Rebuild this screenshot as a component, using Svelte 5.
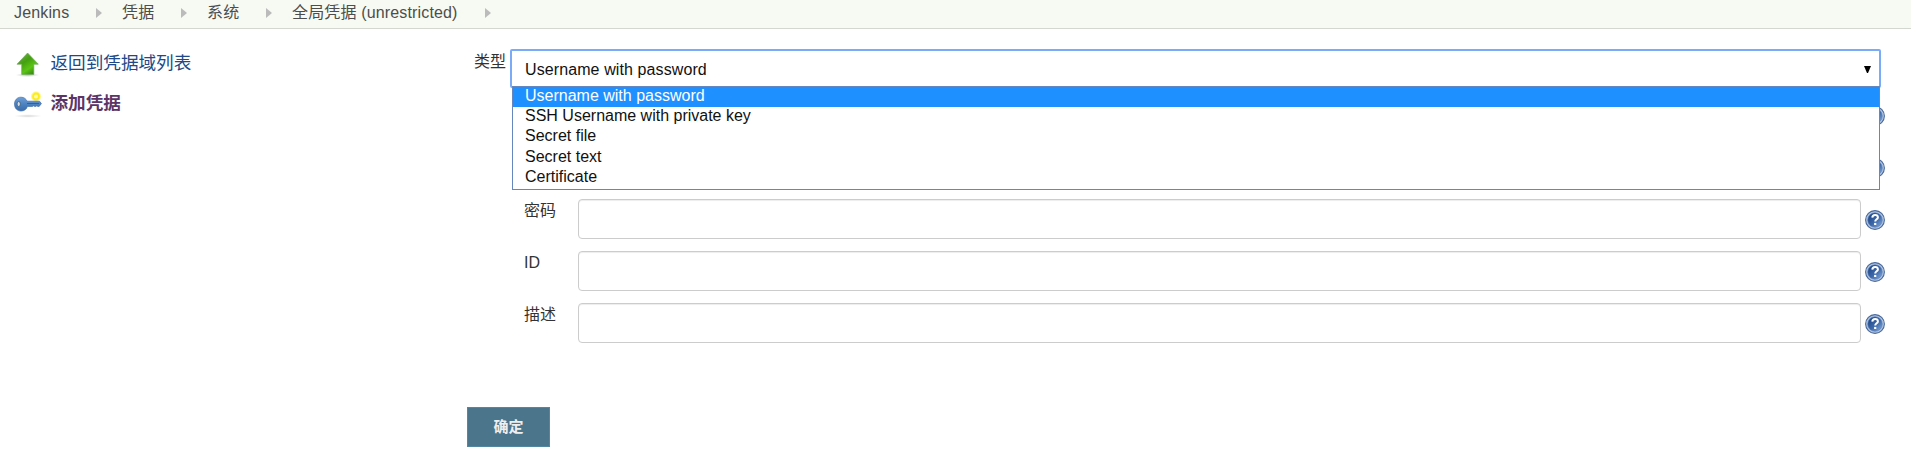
<script>
  const crumbs = ['Jenkins', '凭据', '系统', '全局凭据 (unrestricted)'];
  const options = [
    'Username with password',
    'SSH Username with private key',
    'Secret file',
    'Secret text',
    'Certificate'
  ];
  const fields = ['', '', '密码', 'ID', '描述'];
</script>

<header class="crumbs">
  {#each crumbs as crumb}
    <span class="crumb">{crumb}</span>
    <svg class="sep" width="6" height="10" viewBox="0 0 6 10"><path d="M0 0L6 5L0 10Z" fill="#bbb" /></svg>
  {/each}
</header>

<div class="page">
  <nav class="side">
    <a class="task" href="#back">
      <svg width="28" height="28" viewBox="0 0 28 28">
        <defs>
          <linearGradient id="green" x1="0" y1="0" x2="0.7" y2="1">
            <stop offset="0" stop-color="#7eb458" />
            <stop offset="0.45" stop-color="#43a010" />
            <stop offset="0.75" stop-color="#5cc415" />
            <stop offset="1" stop-color="#388b13" />
          </linearGradient>
          <radialGradient id="shade">
            <stop offset="0" stop-color="#777" stop-opacity="0.5" />
            <stop offset="1" stop-color="#999" stop-opacity="0" />
          </radialGradient>
        </defs>
        <ellipse cx="13.5" cy="25" rx="12" ry="2" fill="url(#shade)" />
        <path d="M13.6 3L24.3 14.2H19.8V24.4H7.7V14.2H3Z" fill="url(#green)" stroke="#6fa857" stroke-width="0.7" />
      </svg>
      <span>返回到凭据域列表</span>
    </a>
    <a class="task current" href="#add">
      <svg width="28" height="28" viewBox="0 0 28 28">
        <defs>
          <linearGradient id="steel" x1="0" y1="0" x2="0" y2="1">
            <stop offset="0" stop-color="#6f9fd5" />
            <stop offset="0.5" stop-color="#4d83c2" />
            <stop offset="1" stop-color="#3b6ca8" />
          </linearGradient>
          <radialGradient id="pale">
            <stop offset="0" stop-color="#999" stop-opacity="0.4" />
            <stop offset="1" stop-color="#aaa" stop-opacity="0" />
          </radialGradient>
        </defs>
        <ellipse cx="14" cy="26" rx="14" ry="1.8" fill="url(#pale)" />
        <circle cx="22" cy="6.4" r="4.9" fill="#fff35a" opacity="0.75" />
        <circle cx="22" cy="6.4" r="2.9" fill="#fff9ae" stroke="#fbec20" stroke-width="1.8" />
        <path
          d="M7 7.2C10.2 7.2 12.2 9 13 11.2H25.5L27.4 13.6L25.2 16.4H23.8L22.8 15.8L21.8 16.4H20.6L19.6 15.8L18.5 16.4H13.4C12.6 19.2 10.4 21 7 21C3 21 0.5 18 0.5 14.1C0.5 10.2 3 7.2 7 7.2Z"
          fill="url(#steel)" stroke="#416fa9" stroke-width="0.7" />
        <path d="M13 13.5H25" stroke="#31609b" stroke-width="1" />
        <ellipse cx="4.7" cy="14" rx="1.7" ry="2.5" fill="#d7dde2" stroke="#416584" stroke-width="0.9" />
      </svg>
      <span>添加凭据</span>
    </a>
  </nav>

  <main class="form">
    <div class="kind">
      <label class="kind-label" for="kind">类型</label>
      <div class="select" id="kind" role="combobox" aria-expanded="true" aria-controls="kinds" tabindex="0">
        <span>Username with password</span>
        <svg width="7" height="7" viewBox="0 0 7 7"><path d="M0 0H7L4 7H3Z" fill="#000" /></svg>
        <ul class="popup" id="kinds">
          {#each options as option, i}
            <li class:active={i === 0}>{option}</li>
          {/each}
        </ul>
      </div>
    </div>

    <div class="fields">
      {#each fields as field, i}
        <div class="field">
          <label for={`field-${i}`}>{field}</label>
          <input id={`field-${i}`} type="text" />
          <svg class="help" width="20" height="20" viewBox="0 0 20 20">
            <defs>
              <linearGradient id={`disc-${i}`} x1="0" y1="0" x2="1" y2="1">
                <stop offset="0.1" stop-color="#1f4584" />
                <stop offset="0.55" stop-color="#3c68aa" />
                <stop offset="1" stop-color="#8cb1df" />
              </linearGradient>
            </defs>
            <circle cx="10" cy="10" r="9.4" fill="#b3c7e3" stroke="#49699b" stroke-width="1.1" />
            <circle cx="10" cy="10" r="7.3" fill={`url(#disc-${i})`} stroke="#5d80b4" stroke-width="0.6" />
            <path d="M7.3 7.6C7.4 5.8 8.5 5 10.1 5C11.8 5 12.9 6 12.9 7.4C12.9 9.3 10.2 9.4 10.2 11.6" fill="none" stroke="#fff" stroke-width="2" />
            <rect x="9.1" y="12.9" width="2.2" height="2.1" fill="#fff" />
          </svg>
        </div>
      {/each}
    </div>

    <button class="submit" type="button">确定</button>
  </main>
</div>

<style>
  :global(body) {
    margin: 0;
    background: #fff;
    overflow: hidden;
  }
  :global(#app) {
    font-family: 'Liberation Sans', 'Noto Sans CJK SC', sans-serif;
    font-size: 16px;
    color: #333;
  }
  .crumbs {
    box-sizing: border-box;
    height: 29px;
    padding: 0 0 3px 14px;
    display: flex;
    align-items: center;
    background: #f6faf2;
    border-bottom: 1px solid #d3d7cf;
    color: #4d4d4d;
    line-height: 24px;
    letter-spacing: 0.15px;
    white-space: nowrap;
  }
  .sep {
    margin: 0 19.7px 0 27px;
  }
  .page {
    display: grid;
    grid-template-columns: 467px 1fr;
  }
  .side {
    padding: 21px 0 0 14px;
  }
  .task {
    display: flex;
    align-items: center;
    gap: 8.5px;
    height: 28px;
    margin-bottom: 12px;
    color: #204a87;
    font-size: 17.6px;
    line-height: 26px;
    text-decoration: none;
  }
  .task span {
    margin-top: -2px;
  }
  .current {
    color: #5c3566;
    font-weight: bold;
  }
  .form {
    padding: 20px 26px 0 0;
  }
  .kind {
    display: flex;
    height: 46px;
    padding-left: 7px;
  }
  .kind-label {
    width: 36px;
    padding-top: 1px;
    line-height: 24px;
  }
  .select {
    position: relative;
    box-sizing: border-box;
    flex: 1;
    height: 39px;
    margin-right: 4px;
    padding: 2px 8px 0 13px;
    display: flex;
    align-items: center;
    justify-content: space-between;
    border: 2px solid #7aabf7;
    border-radius: 2px;
    color: #111;
    letter-spacing: 0.1px;
  }
  .popup {
    position: absolute;
    box-sizing: border-box;
    left: 0;
    right: -1px;
    top: 35px;
    height: 104px;
    margin: 0;
    padding: 0;
    list-style: none;
    background: #fff;
    border: 1px solid #6687bd;
    color: #111;
    letter-spacing: 0;
  }
  .popup li {
    height: 20.2px;
    padding-left: 12px;
    line-height: 18px;
  }
  .popup .active {
    background: #1e90ff;
    color: #fff;
  }
  .fields {
    display: grid;
    gap: 12px;
  }
  .field {
    display: grid;
    grid-template-columns: 54px 1283px 24px;
    padding-left: 57px;
    height: 40px;
  }
  .field label {
    line-height: 24px;
  }
  .field input {
    box-sizing: border-box;
    width: 100%;
    height: 40px;
    border: 1px solid #ccc;
    border-radius: 4px;
    box-shadow: inset 0 1px 1px rgba(0, 0, 0, 0.075);
    outline: none;
  }
  .help {
    margin: 11px 0 0 4px;
  }
  .submit {
    display: block;
    width: 83px;
    height: 40px;
    margin-top: 64px;
    padding: 0;
    border: 1px solid #5187a0;
    background: #4b758b;
    color: #eee;
    font: bold 15px/38px 'Liberation Sans', 'Noto Sans CJK SC', sans-serif;
  }
</style>
